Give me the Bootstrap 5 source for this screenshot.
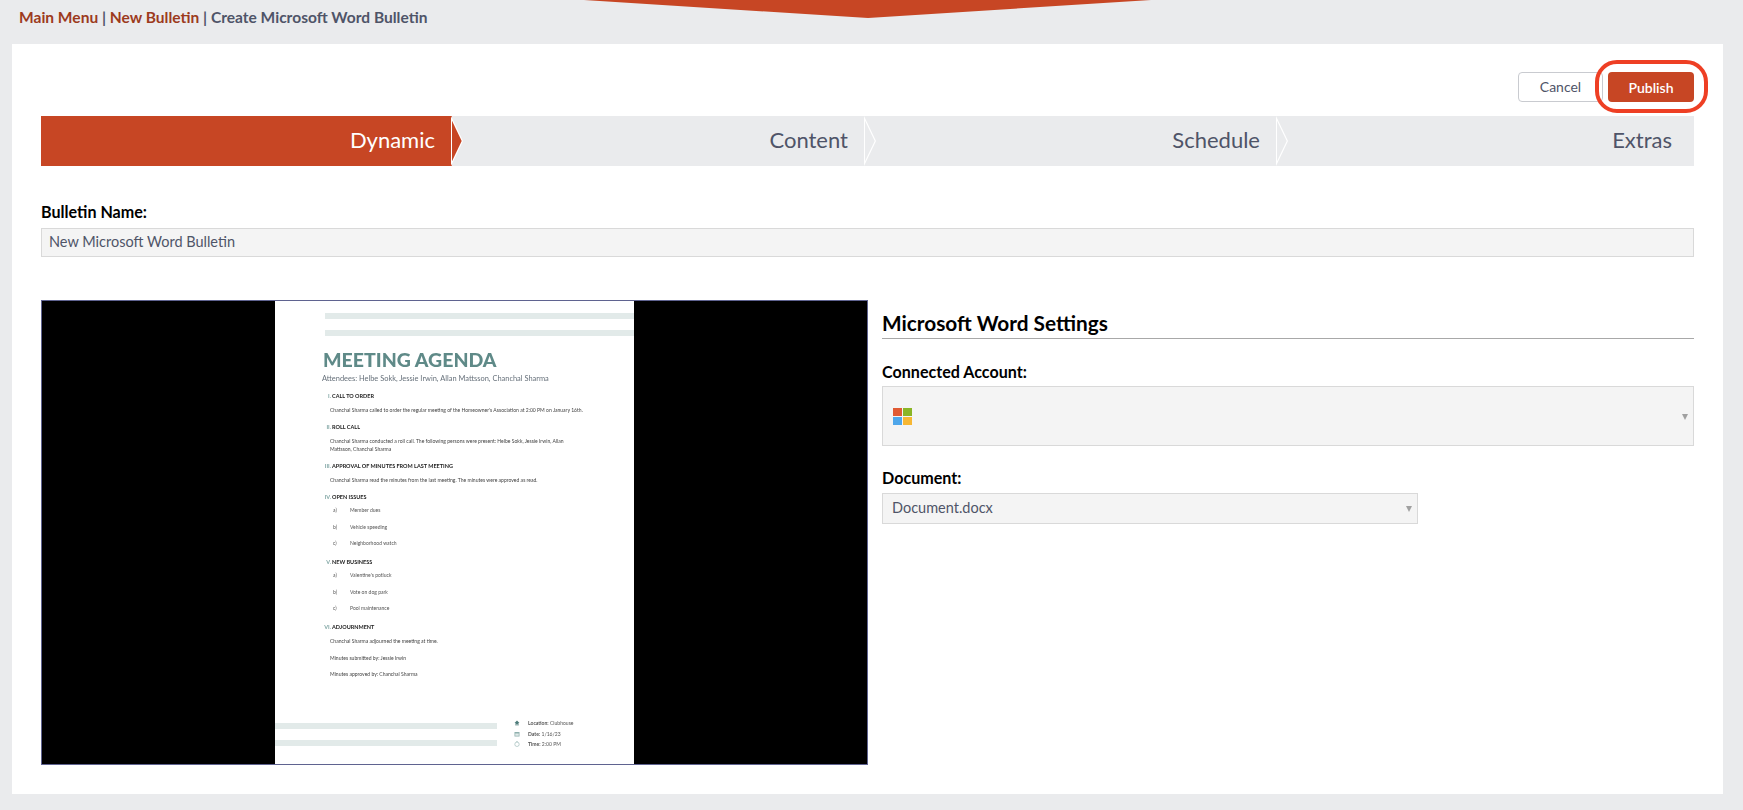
<!DOCTYPE html>
<html lang="en">
<head>
<meta charset="utf-8">
<title>Create Microsoft Word Bulletin</title>
<link rel="stylesheet" href="https://cdn.jsdelivr.net/npm/bootstrap@5.3.0/dist/css/bootstrap.min.css">
<style>
html,body{height:100%}
body{background:#eaebed;font-family:"Lato","Noto Sans",sans-serif;color:#4f5468;position:relative;overflow:hidden}
.top-flag{position:absolute;left:584px;top:0;width:567px;height:18px;background:#c74624;clip-path:polygon(0 0,100% 0,50.1% 100%)}
.crumbs{height:44px;padding:5px 0 0 19px;font-size:15.55px;font-weight:700;line-height:24px}
.crumbs a{color:#9c3a1d;text-decoration:none}
.panel{margin:0 20px 0 12px;background:#fff;padding:28px 29px 30px;height:750px}
.btn-cancel{width:85px;height:30px;padding:0;font-size:14px;color:#4f5468;border:1px solid #c9cbd0;background:#fff;border-radius:4px;line-height:28px}
.btn-pub{width:86px;height:30px;padding:0;font-size:14px;font-weight:600;color:#fff;background:#c74624;border:0;border-radius:4px}
.pub-wrap{position:relative;margin-left:5px}
.pub-wrap::after{content:"";position:absolute;left:-13px;right:-14px;top:-12px;bottom:-11px;border:4px solid #ee3f24;border-radius:22px;pointer-events:none}
.steps{margin-top:14px;height:50px}
.step{position:relative;flex:0 0 412px;background:#eaebed;font-size:22px;line-height:48px;text-align:right;padding-right:17px;color:#4f5468}
.step:first-child{flex-basis:411px}
.step:nth-child(2){flex-basis:413px}
.step:last-child{flex:1 1 auto;padding-right:22px}
.step:not(:last-child)::before{content:"";position:absolute;z-index:1;top:0;right:-11px;width:12px;height:100%;background:#fff;clip-path:polygon(0 0,100% 50%,0 100%)}
.step:not(:last-child)::after{content:"";position:absolute;z-index:2;top:0;right:-9.7px;width:9.7px;height:100%;background:#eaebed;clip-path:polygon(0 4.8px,100% 50%,0 calc(100% - 4.8px))}
.step.on{background:#c74624;color:#fff}
.step.on::after{background:#c74624}
.fld-label{font-size:16.1px;font-weight:700;color:#000;line-height:20px;margin-bottom:6px;display:block}
.fld{background-color:#f4f4f4;border:1px solid #d9d9d9;border-radius:0;color:#4f5468;font-size:14.5px;box-shadow:none}
.name-input{height:29px;padding:0 7px 2px}
.name-block{margin-top:36px}
.work{margin-top:43px;gap:14px}
.preview{flex:0 0 827px;height:465px;background:#000;border:1px solid #5f6390;display:flex;justify-content:center;box-sizing:border-box}
.sheet{width:359px;height:100%;background:#fff;color:#333;font-family:"Lato","Noto Sans",sans-serif;font-size:5.05px;line-height:8px;filter:blur(.35px);overflow:hidden;white-space:nowrap}
.sheet-bar{height:6px;background:#e2eae9}
.sheet-head{padding:12px 0 0 50px}
.sheet-head .bar2{margin-top:11px}
.sheet-title{margin:10px 0 0 48px;font-size:19.5px;line-height:28px;font-weight:900;color:#5f8a88}
.sheet-att{margin-left:47px;font-size:7.45px;line-height:9px;color:#66707a}
.agenda{margin:9px 0 0 48px}
.ag-h{display:flex;font-size:5.5px;font-weight:700;color:#222;margin-top:9px}
.ag-h i{font-style:normal;flex:0 0 8px;margin-right:1px;text-align:right;color:#7fa5a3}
.ag-p{margin:6px 0 0 7px;color:#444}
.ag-p.sp{margin-top:8.5px}
.ag-i{display:flex;margin:8.5px 0 0 10px;color:#555}
.ag-h + .ag-i{margin-top:5px}
.ag-i + .ag-h{margin-top:11px}
.ag-i span{flex:0 0 17px}
.sheet-foot{margin-top:40px;gap:17px}
.foot-bars{flex:0 0 222px;padding-top:5px}
.foot-bars .sheet-bar+.sheet-bar{margin-top:10.5px}
.foot-info{line-height:10.5px;color:#555}
.foot-info div{display:flex;align-items:center;gap:8px}
.foot-info svg{width:6px;height:6px;flex:none}
.settings{flex:1 1 auto;min-width:0}
.settings-title{font-size:20.8px;font-weight:700;color:#000;line-height:24px;margin:11px 0 0;padding-bottom:3px;border-bottom:1px solid #a8a8a8}
.settings .fld-label{margin-bottom:4px}
.conn-label{margin-top:23px}
.acct{height:60px;padding:0 0 0 10px;display:flex;align-items:center;margin-bottom:22px;background-position:right 5px center}
.acct svg{width:19px;height:17px}
.fld-select{background-image:url("data:image/svg+xml,%3Csvg xmlns='http://www.w3.org/2000/svg' width='6' height='7'%3E%3Cpath d='M0 1h6L3 7z' fill='%23a0a0a0'/%3E%3C/svg%3E");background-size:6px 7px;background-repeat:no-repeat}
.doc-sel{width:536px;height:31px;margin-top:5px;padding:0 9px 1px;background-position:right 5px center}
</style>
</head>
<body>
<div class="top-flag"></div>
<div class="crumbs"><a href="#">Main Menu</a> | <a href="#">New Bulletin</a> | Create Microsoft Word Bulletin</div>
<main class="panel">
  <div class="d-flex justify-content-end">
    <button class="btn btn-cancel">Cancel</button>
    <div class="pub-wrap"><button class="btn btn-pub">Publish</button></div>
  </div>
  <div class="steps d-flex">
    <div class="step on">Dynamic</div>
    <div class="step">Content</div>
    <div class="step">Schedule</div>
    <div class="step">Extras</div>
  </div>
  <div class="name-block">
    <label class="fld-label" for="bn">Bulletin Name:</label>
    <input id="bn" class="form-control fld name-input" value="New Microsoft Word Bulletin">
  </div>
  <div class="work d-flex">
    <div class="preview">
      <div class="sheet">
        <div class="sheet-head"><div class="sheet-bar"></div><div class="sheet-bar bar2"></div></div>
        <div class="sheet-title">MEETING AGENDA</div>
        <div class="sheet-att">Attendees: Helbe Sokk, Jessie Irwin, Allan Mattsson, Chanchal Sharma</div>
        <div class="agenda">
          <div class="ag-h"><i>I.</i>CALL TO ORDER</div>
          <div class="ag-p">Chanchal Sharma called to order the regular meeting of the Homeowner's Association at 2:00 PM on January 16th.</div>
          <div class="ag-h"><i>II.</i>ROLL CALL</div>
          <div class="ag-p">Chanchal Sharma conducted a roll call. The following persons were present: Helbe Sokk, Jessie Irwin, Allan<br>Mattsson, Chanchal Sharma</div>
          <div class="ag-h"><i>III.</i>APPROVAL OF MINUTES FROM LAST MEETING</div>
          <div class="ag-p">Chanchal Sharma read the minutes from the last meeting. The minutes were approved as read.</div>
          <div class="ag-h"><i>IV.</i>OPEN ISSUES</div>
          <div class="ag-i"><span>a)</span>Member dues</div>
          <div class="ag-i"><span>b)</span>Vehicle speeding</div>
          <div class="ag-i"><span>c)</span>Neighborhood watch</div>
          <div class="ag-h"><i>V.</i>NEW BUSINESS</div>
          <div class="ag-i"><span>a)</span>Valentine's potluck</div>
          <div class="ag-i"><span>b)</span>Vote on dog park</div>
          <div class="ag-i"><span>c)</span>Pool maintenance</div>
          <div class="ag-h"><i>VI.</i>ADJOURNMENT</div>
          <div class="ag-p">Chanchal Sharma adjourned the meeting at time.</div>
          <div class="ag-p sp">Minutes submitted by: Jessie Irwin</div>
          <div class="ag-p sp">Minutes approved by: Chanchal Sharma</div>
        </div>
        <div class="sheet-foot d-flex">
          <div class="foot-bars"><div class="sheet-bar"></div><div class="sheet-bar"></div></div>
          <div class="foot-info">
            <div><svg viewBox="0 0 12 12"><path d="M6 1 1 6h2v5h2.2V8h1.6v3H9V6h2z" fill="#4f7d7b"/></svg><span><b>Location:</b> Clubhouse</span></div>
            <div><svg viewBox="0 0 12 12"><rect x="1" y="2" width="10" height="9" fill="#8fb0ae"/><rect x="2.5" y="5" width="7" height="4.5" fill="#dfe9e8"/></svg><span><b>Date:</b> 1/16/23</span></div>
            <div><svg viewBox="0 0 12 12"><circle cx="6" cy="6.6" r="4.4" fill="none" stroke="#7fa5a3"/><path d="M4.6 1h2.8" stroke="#7fa5a3"/></svg><span><b>Time:</b> 2:00 PM</span></div>
          </div>
        </div>
      </div>
    </div>
    <section class="settings">
      <h2 class="settings-title">Microsoft Word Settings</h2>
      <label class="fld-label conn-label">Connected Account:</label>
      <div class="form-select fld fld-select acct">
        <svg viewBox="0 0 19 17" aria-label="Microsoft">
          <rect width="9" height="8" fill="#e05a33"/><rect x="10" width="9" height="8" fill="#8ab526"/>
          <rect y="9" width="9" height="8" fill="#4ea6ea"/><rect x="10" y="9" width="9" height="8" fill="#f7b733"/>
        </svg>
      </div>
      <label class="fld-label">Document:</label>
      <select class="form-select fld fld-select doc-sel"><option>Document.docx</option></select>
    </section>
  </div>
</main>
<script src="https://cdn.jsdelivr.net/npm/bootstrap@5.3.0/dist/js/bootstrap.bundle.min.js"></script>
</body>
</html>
